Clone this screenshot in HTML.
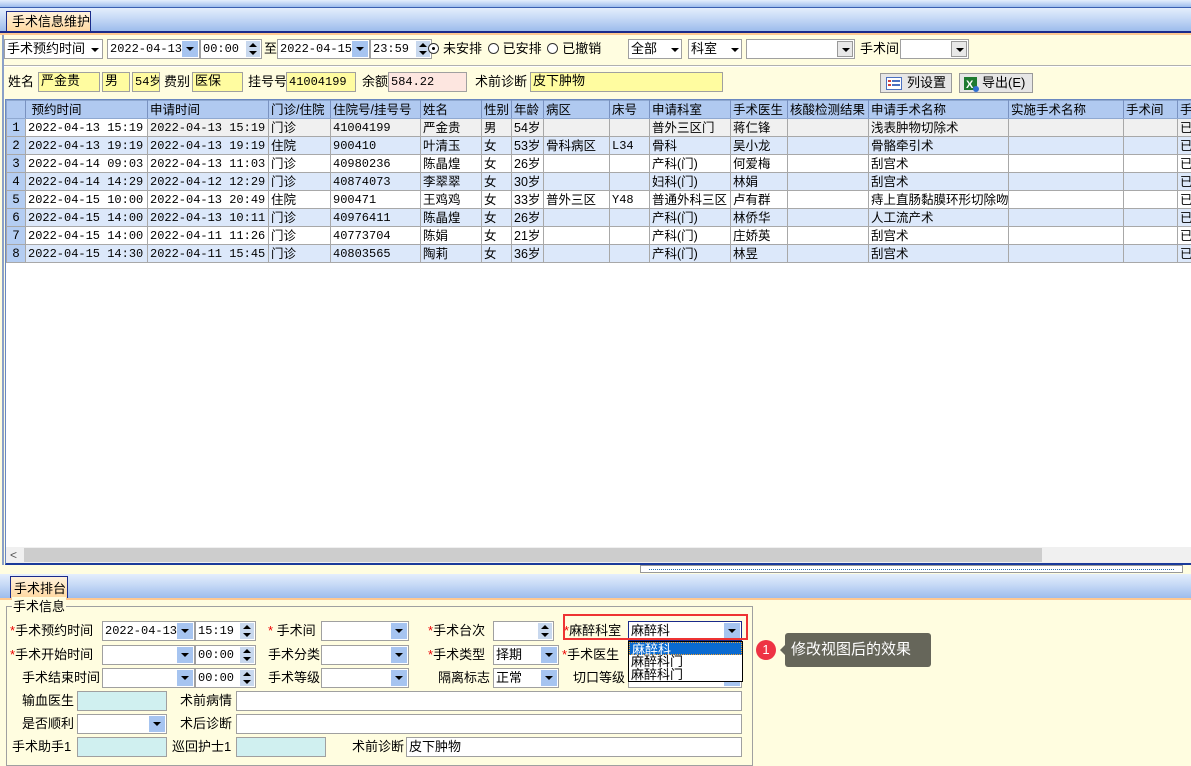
<!DOCTYPE html>
<html><head><meta charset="utf-8"><style>
*{box-sizing:border-box;margin:0;padding:0}
body{width:1191px;height:752px;overflow:hidden;position:relative;background:#fffde0;font-family:"Liberation Sans","Noto Sans CJK SC",sans-serif;font-size:12px;color:#000}
.a{position:absolute}
.bar{background:linear-gradient(#e4eefc,#c6d9f6 45%,#9dbcec 100%)}
.tab{position:absolute;background:linear-gradient(#fff2dc,#ffd79e);border:1px solid #1a2a8a;border-bottom:none;font-size:13px;line-height:18px;padding:1px 0 0 3px;white-space:nowrap;overflow:hidden}
.box{position:absolute;background:#fff;border:1px solid #a0a0a0;height:20px;font-family:"Liberation Mono","Noto Sans CJK SC",monospace;font-size:12px;line-height:18px;padding-left:2px;white-space:nowrap;overflow:hidden}
.dd{position:absolute;right:1px;top:1px;width:16px;height:16px;background:#a6c4f0}
.dd:after{content:"";position:absolute;left:4px;top:6px;border-left:4px solid transparent;border-right:4px solid transparent;border-top:4px solid #000}
.sp{position:absolute;right:1px;top:1px;width:14px;height:16px;background:#c8d8ee}
.sp:before{content:"";position:absolute;left:3px;top:2px;border-left:4px solid transparent;border-right:4px solid transparent;border-bottom:4px solid #000}
.sp:after{content:"";position:absolute;left:3px;top:10px;border-left:4px solid transparent;border-right:4px solid transparent;border-top:4px solid #000}
.lb{position:absolute;font-size:13px;line-height:20px;white-space:nowrap}
.st{color:#e00}
.yl{background:#fffca0}
.cy{background:#d0f0f0}
.tri{display:inline-block;border-left:4px solid transparent;border-right:4px solid transparent;border-top:4px solid #000;vertical-align:middle;margin-left:6px}
table{border-collapse:collapse;table-layout:fixed;font-size:12.5px}
td{border:1px solid #a8a8a8;height:18px;padding:0 2px;white-space:nowrap;overflow:hidden;line-height:16px}
td.m{font-family:"Liberation Mono","Noto Sans CJK SC",monospace;font-size:12px}
tr.h td{background:#b0c9f0;border-color:#8fa8d0;border-right-color:#7a92c0}
tr.e td{background:#dce8fa}
tr.s td{background:#f0f0f0}
td.n{background:#b4cdf2!important;text-align:center;font-family:"Liberation Mono",monospace}
.rad{display:inline-block;width:11px;height:11px;border:1px solid #333;border-radius:50%;vertical-align:-1px;margin-right:4px;background:#fff;position:relative}
.rad.on:after{content:"";position:absolute;left:3px;top:3px;width:3px;height:3px;background:#000;border-radius:50%}
</style></head><body>
<div class="a bar" style="left:0;top:0;width:1191px;height:8px;border-bottom:1px solid #3a5fb0"></div>
<div class="a bar" style="left:0;top:8px;width:1191px;height:23px"></div>
<div class="tab" style="left:6px;top:11px;width:85px;height:21px;padding-left:5px">手术信息维护</div>
<div class="a" style="left:0;top:31px;width:1191px;height:2px;background:#1a2a8a"></div>
<div class="a" style="left:0;top:33px;width:1191px;height:2px;background:#ffc890"></div>
<div class="a" style="left:2px;top:35px;width:2px;height:530px;background:#8aa0c8"></div>

<div class="box" style="left:4px;top:39px;width:99px;font-family:'Liberation Sans','Noto Sans CJK SC';font-size:13px">手术预约时间<span class="tri"></span></div>
<div class="box" style="left:107px;top:39px;width:93px">2022-04-13<span class="dd"></span></div>
<div class="box" style="left:200px;top:39px;width:62px">00:00<span class="sp"></span></div>
<div class="lb" style="left:264px;top:39px">至</div>
<div class="box" style="left:277px;top:39px;width:93px">2022-04-15<span class="dd"></span></div>
<div class="box" style="left:370px;top:39px;width:62px">23:59<span class="sp"></span></div>
<div class="lb" style="left:428px;top:39px"><span class="rad on"></span>未安排 <span class="rad" style="margin-left:2px"></span>已安排 <span class="rad" style="margin-left:2px"></span>已撤销</div>
<div class="box" style="left:628px;top:39px;width:54px;font-family:'Liberation Sans','Noto Sans CJK SC';font-size:13px">全部<span class="tri" style="margin-left:14px"></span></div>
<div class="box" style="left:688px;top:39px;width:54px;font-family:'Liberation Sans','Noto Sans CJK SC';font-size:13px">科室<span class="tri" style="margin-left:14px"></span></div>
<div class="box" style="left:746px;top:39px;width:109px"><span class="dd" style="background:#e8e8e8;border:1px solid #999"></span></div>
<div class="lb" style="left:860px;top:39px">手术间</div>
<div class="box" style="left:900px;top:39px;width:69px"><span class="dd" style="background:#e8e8e8;border:1px solid #999"></span></div>
<div class="a" style="left:4px;top:65px;width:1187px;height:2px;background:#b0b0b0;border-bottom:1px solid #fff"></div>

<div class="lb" style="left:8px;top:72px">姓名</div>
<div class="box yl" style="left:38px;top:72px;width:62px;font-size:13px">严金贵</div>
<div class="box yl" style="left:102px;top:72px;width:28px;font-size:13px">男</div>
<div class="box yl" style="left:132px;top:72px;width:28px;font-size:12px">54岁</div>
<div class="lb" style="left:164px;top:72px">费别</div>
<div class="box yl" style="left:192px;top:72px;width:51px;font-size:13px">医保</div>
<div class="lb" style="left:248px;top:72px">挂号号</div>
<div class="box yl" style="left:286px;top:72px;width:70px">41004199</div>
<div class="lb" style="left:362px;top:72px">余额</div>
<div class="box" style="left:388px;top:72px;width:79px;background:#fde6e0">584.22</div>
<div class="lb" style="left:475px;top:72px">术前诊断</div>
<div class="box yl" style="left:530px;top:72px;width:193px;font-size:13px">皮下肿物</div>
<div class="a" style="left:880px;top:73px;width:72px;height:20px;background:#e6e6e6;border:1px solid #999;font-size:13px;line-height:18px;padding-left:26px">列设置
<svg class="a" style="left:5px;top:3px" width="16" height="13"><rect x=".5" y=".5" width="15" height="12" fill="#fff" stroke="#4a70c0"/><rect x="2" y="3" width="3" height="2" fill="#d04040"/><rect x="6" y="3" width="8" height="2" fill="#4a70c0"/><rect x="2" y="7" width="3" height="2" fill="#d04040"/><rect x="6" y="7" width="8" height="2" fill="#4a70c0"/></svg></div>
<div class="a" style="left:959px;top:73px;width:74px;height:20px;background:#e6e6e6;border:1px solid #999;font-size:13px;line-height:18px;padding-left:22px">导出(E)
<svg class="a" style="left:3px;top:2px" width="16" height="16"><rect x="1" y="1" width="13" height="13" fill="#1e7a30"/><text x="3" y="12" font-size="11" fill="#fff" font-family="Liberation Sans" font-weight="bold">X</text><circle cx="13" cy="13" r="3" fill="#3070d0"/></svg></div>

<div class="a" style="left:5px;top:99px;width:1186px;height:466px;background:#fff;border-left:1px solid #6a88c0;border-top:1px solid #6a88c0;border-bottom:2px solid #1a3a9a;overflow:hidden">
<table style="width:1200px">
<colgroup><col style="width:19px"><col style="width:122px"><col style="width:121px"><col style="width:62px"><col style="width:90px"><col style="width:61px"><col style="width:30px"><col style="width:32px"><col style="width:66px"><col style="width:40px"><col style="width:81px"><col style="width:57px"><col style="width:81px"><col style="width:140px"><col style="width:115px"><col style="width:54px"><col style="width:29px"></colgroup>
<tr class="h"><td></td><td>&nbsp;预约时间</td><td>申请时间</td><td>门诊/住院</td><td>住院号/挂号号</td><td>姓名</td><td>性别</td><td>年龄</td><td>病区</td><td>床号</td><td>申请科室</td><td>手术医生</td><td>核酸检测结果</td><td>申请手术名称</td><td>实施手术名称</td><td>手术间</td><td>手</td></tr>
<tr class="s"><td class="n">1</td><td class="m" style="background:#fff">2022-04-13 15:19</td><td class="m">2022-04-13 15:19</td><td>门诊</td><td class="m">41004199</td><td>严金贵</td><td>男</td><td>54岁</td><td></td><td></td><td>普外三区门</td><td>蒋仁锋</td><td></td><td>浅表肿物切除术</td><td></td><td></td><td>已</td></tr>
<tr class="e"><td class="n">2</td><td class="m">2022-04-13 19:19</td><td class="m">2022-04-13 19:19</td><td>住院</td><td class="m">900410</td><td>叶清玉</td><td>女</td><td>53岁</td><td>骨科病区</td><td class="m">L34</td><td>骨科</td><td>吴小龙</td><td></td><td>骨骼牵引术</td><td></td><td></td><td>已</td></tr>
<tr><td class="n">3</td><td class="m">2022-04-14 09:03</td><td class="m">2022-04-13 11:03</td><td>门诊</td><td class="m">40980236</td><td>陈晶煌</td><td>女</td><td>26岁</td><td></td><td></td><td>产科(门)</td><td>何爱梅</td><td></td><td>刮宫术</td><td></td><td></td><td>已</td></tr>
<tr class="e"><td class="n">4</td><td class="m">2022-04-14 14:29</td><td class="m">2022-04-12 12:29</td><td>门诊</td><td class="m">40874073</td><td>李翠翠</td><td>女</td><td>30岁</td><td></td><td></td><td>妇科(门)</td><td>林娟</td><td></td><td>刮宫术</td><td></td><td></td><td>已</td></tr>
<tr><td class="n">5</td><td class="m">2022-04-15 10:00</td><td class="m">2022-04-13 20:49</td><td>住院</td><td class="m">900471</td><td>王鸡鸡</td><td>女</td><td>33岁</td><td>普外三区</td><td class="m">Y48</td><td>普通外科三区</td><td>卢有群</td><td></td><td>痔上直肠黏膜环形切除吻</td><td></td><td></td><td>已</td></tr>
<tr class="e"><td class="n">6</td><td class="m">2022-04-15 14:00</td><td class="m">2022-04-13 10:11</td><td>门诊</td><td class="m">40976411</td><td>陈晶煌</td><td>女</td><td>26岁</td><td></td><td></td><td>产科(门)</td><td>林侨华</td><td></td><td>人工流产术</td><td></td><td></td><td>已</td></tr>
<tr><td class="n">7</td><td class="m">2022-04-15 14:00</td><td class="m">2022-04-11 11:26</td><td>门诊</td><td class="m">40773704</td><td>陈娟</td><td>女</td><td>21岁</td><td></td><td></td><td>产科(门)</td><td>庄娇英</td><td></td><td>刮宫术</td><td></td><td></td><td>已</td></tr>
<tr class="e"><td class="n">8</td><td class="m">2022-04-15 14:30</td><td class="m">2022-04-11 15:45</td><td>门诊</td><td class="m">40803565</td><td>陶莉</td><td>女</td><td>36岁</td><td></td><td></td><td>产科(门)</td><td>林昱</td><td></td><td>刮宫术</td><td></td><td></td><td>已</td></tr>
</table>
<div class="a" style="left:0;top:447px;width:1186px;height:16px;background:#f0f0f0"></div>
<div class="a" style="left:4px;top:448px;font-size:12px;color:#555">&lt;</div>
<div class="a" style="left:18px;top:448px;width:1018px;height:14px;background:#cdcdcd"></div>
</div>
<div class="a" style="left:640px;top:565px;width:543px;height:8px;border:1px solid #999;background:#fff"><div class="a" style="left:8px;top:3px;width:525px;border-top:1px dotted #2a70b0"></div></div>

<div class="a bar" style="left:0;top:574px;width:1191px;height:24px"></div>
<div class="tab" style="left:10px;top:576px;width:58px;height:23px;padding-top:3px">手术排台</div>
<div class="a" style="left:0;top:598px;width:1191px;height:2px;background:#ffc890"></div>

<div class="a" style="left:6px;top:606px;width:747px;height:160px;border:1px solid #a0a0a0"></div>
<div class="lb" style="left:12px;top:597px;background:#fffde0;padding:0 1px">手术信息</div>

<div class="lb" style="left:10px;top:621px"><span class="st">*</span>手术预约时间</div>
<div class="box" style="left:102px;top:621px;width:93px">2022-04-13<span class="dd"></span></div>
<div class="box" style="left:195px;top:621px;width:61px">15:19<span class="sp"></span></div>
<div class="lb" style="left:268px;top:621px"><span class="st">*</span> 手术间</div>
<div class="box" style="left:321px;top:621px;width:88px"><span class="dd"></span></div>
<div class="lb" style="left:428px;top:621px"><span class="st">*</span>手术台次</div>
<div class="box" style="left:493px;top:621px;width:61px"><span class="sp"></span></div>
<div class="lb" style="left:564px;top:621px"><span class="st">*</span>麻醉科室</div>
<div class="box" style="left:628px;top:621px;width:114px;border-color:#1a2a8a;font-family:'Liberation Sans','Noto Sans CJK SC';font-size:13px">麻醉科<span class="dd"></span></div>
<div class="a" style="left:563px;top:614px;width:185px;height:26px;border:2px solid #ee3333"></div>

<div class="lb" style="left:10px;top:645px"><span class="st">*</span>手术开始时间</div>
<div class="box" style="left:102px;top:645px;width:93px"><span class="dd"></span></div>
<div class="box" style="left:195px;top:645px;width:61px">00:00<span class="sp"></span></div>
<div class="lb" style="left:268px;top:645px">手术分类</div>
<div class="box" style="left:321px;top:645px;width:88px"><span class="dd"></span></div>
<div class="lb" style="left:428px;top:645px"><span class="st">*</span>手术类型</div>
<div class="box" style="left:493px;top:645px;width:66px;font-family:'Liberation Sans','Noto Sans CJK SC';font-size:13px">择期<span class="dd"></span></div>
<div class="lb" style="left:562px;top:645px"><span class="st">*</span>手术医生</div>

<div class="lb" style="left:22px;top:668px">手术结束时间</div>
<div class="box" style="left:102px;top:668px;width:93px"><span class="dd"></span></div>
<div class="box" style="left:195px;top:668px;width:61px">00:00<span class="sp"></span></div>
<div class="lb" style="left:268px;top:668px">手术等级</div>
<div class="box" style="left:321px;top:668px;width:88px"><span class="dd"></span></div>
<div class="lb" style="left:438px;top:668px">隔离标志</div>
<div class="box" style="left:493px;top:668px;width:66px;font-family:'Liberation Sans','Noto Sans CJK SC';font-size:13px">正常<span class="dd"></span></div>
<div class="lb" style="left:573px;top:668px">切口等级</div>
<div class="box" style="left:628px;top:668px;width:114px"><span class="dd"></span></div>

<div class="a" style="left:628px;top:641px;width:115px;height:41px;background:#fff;border:1px solid #000;font-size:13px;line-height:13px">
<div style="background:#0a6ad0;color:#fff;border:1px dotted #f0a030;height:13px;padding-left:2px">麻醉科</div>
<div style="padding-left:2px">麻醉科门</div>
<div style="padding-left:2px">麻醉科门</div></div>

<div class="lb" style="left:22px;top:691px">输血医生</div>
<div class="box cy" style="left:77px;top:691px;width:90px"></div>
<div class="lb" style="left:180px;top:691px">术前病情</div>
<div class="box" style="left:236px;top:691px;width:506px"></div>
<div class="lb" style="left:22px;top:714px">是否顺利</div>
<div class="box" style="left:77px;top:714px;width:90px"><span class="dd"></span></div>
<div class="lb" style="left:180px;top:714px">术后诊断</div>
<div class="box" style="left:236px;top:714px;width:506px"></div>
<div class="lb" style="left:12px;top:737px">手术助手1</div>
<div class="box cy" style="left:77px;top:737px;width:90px"></div>
<div class="lb" style="left:172px;top:737px">巡回护士1</div>
<div class="box cy" style="left:236px;top:737px;width:90px"></div>
<div class="lb" style="left:352px;top:737px">术前诊断</div>
<div class="box" style="left:406px;top:737px;width:336px;font-family:'Liberation Sans','Noto Sans CJK SC';font-size:13px">皮下肿物</div>

<div class="a" style="left:756px;top:640px;width:20px;height:20px;border-radius:50%;background:#ee3344;color:#fff;text-align:center;line-height:20px;font-size:13px">1</div>
<div class="a" style="left:785px;top:633px;width:146px;height:34px;background:#66665a;border-radius:3px;color:#fff;font-size:15px;line-height:34px;padding-left:6px">修改视图后的效果</div>
<div class="a" style="left:780px;top:645px;border-top:5px solid transparent;border-bottom:5px solid transparent;border-right:5px solid #66665a"></div>
</body></html>
